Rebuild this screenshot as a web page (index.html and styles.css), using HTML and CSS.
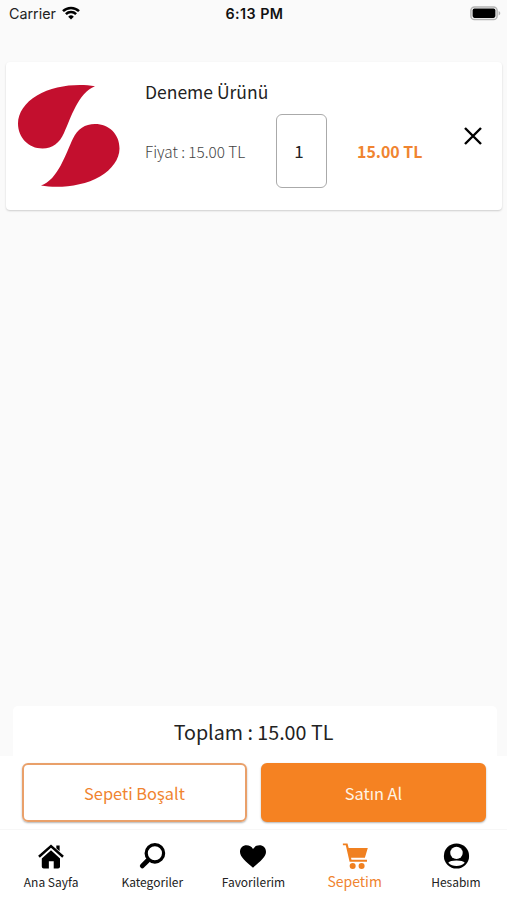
FILE: index.html
```html
<!DOCTYPE html>
<html lang="tr">
<head>
<meta charset="utf-8">
<meta name="viewport" content="width=device-width">
<title>Sepetim</title>
<link rel="stylesheet" href="styles.css">
</head>
<body>
<div class="screen">
  <header class="status">
    <div class="carrier"><span>Carrier</span>
      <svg class="wifi" viewBox="0 0 18 14" width="18" height="14" fill="none" stroke="#000" stroke-width="2.5"><path d="M1 5.2A11.3 11.3 0 0 1 17 5.2M3.9 8.2a7.2 7.2 0 0 1 10.2 0"/><path d="M9 13.6 6.2 10.7a4 4 0 0 1 5.6 0Z" fill="#000" stroke="none"/></svg>
    </div>
    <div class="time">6:13 PM</div>
    <svg class="battery" viewBox="0 0 31 15" width="31" height="15"><rect x=".9" y=".9" width="26.2" height="12.7" rx="3.6" fill="#fafafa" stroke="#b3b3b3" stroke-width="1.5"/><rect x="2.6" y="2.600" width="22.8" height="9.3" rx="1.8"/><path d="M28.6 5v4.500c2.200-.8 2.200-3.700 0-4.500Z" fill="#b3b3b3"/></svg>
  </header>
  <main class="cart">
    <article class="item">
      <svg class="logo" viewBox="0 0 104 104" width="104" height="104" fill="#c30f2e"><path d="M78 2.3C61-.8 36 1.500 20 11.500 8 18.500 1 29 1 39.500c0 14 10.500 25 24.500 25 10 0 17-5.500 21.500-15.500C54 34 61 9 78 2.300Z"/><path d="M24 101.500C41 104.600 66 102.500 83 92.500 95 85.500 102.500 75 102.500 64.500 102.500 50 92 40 78 40 68 40 60.500 45 56 54.500 49 69 41 96 24 101.500Z"/></svg>
      <div class="details">
        <h1 class="name">Deneme Ürünü</h1>
        <div class="row">
          <span class="unit">Fiyat : 15.00 TL</span>
          <span class="qty">1</span>
          <span class="sum">15.00 TL</span>
        </div>
      </div>
      <svg class="remove" viewBox="0 0 18 18" width="18" height="18" stroke="#000" stroke-width="2.4"><path d="M1 1 17 17M17 1 1 17"/></svg>
    </article>
  </main>
  <div class="total-wrap"><section class="total">Toplam : 15.00 TL</section></div>
  <section class="actions">
    <div class="btn outline"><span>Sepeti Boşalt</span></div>
    <div class="btn solid"><span>Satın Al</span></div>
  </section>
  <nav class="tabs">
    <div class="tab"><svg viewBox="0 0 28 28" width="28" height="28"><path d="M19.500 3.200h3.400v6l-3.400-3.100Z"/><path d="M1.600 14.800 14 3.800l12.400 11" fill="none" stroke="#000" stroke-width="2.600"/><path d="m14 8 9.300 8.600v8.200q0 2-2 2h-4.500v-7.300h-5v7.300H6.500q-2 0-2-2v-8.200Z"/></svg><span>Ana Sayfa</span></div>
    <div class="tab"><svg class="lens" viewBox="0 0 28 28" width="28" height="28"><circle cx="17" cy="11.200" r="9" stroke-width="3.400"/><path d="m9.600 18.600-5.600 5.600" stroke-width="5" stroke-linecap="round"/></svg><span>Kategoriler</span></div>
    <div class="tab heart"><svg viewBox="0 0 28 28" width="28" height="28"><path d="M14 26C7 19.800 .6 14.800 .6 9.800.6 5.600 3.600 3 7.300 3 10.200 3 12.600 4.400 14 6.700 15.400 4.400 17.800 3 20.700 3c3.700 0 6.700 2.600 6.700 6.800 0 5-6.400 10-13.400 16.200Z"/></svg><span>Favorilerim</span></div>
    <div class="tab active"><svg viewBox="0 0 28 28" width="28" height="28"><path d="M1.500 1h4.800l1.200 4.800h19.700l-3 9.900H9.900l.5 2.100h16v2H8.400L4.500 3h-3Z"/><circle cx="11.600" cy="24.300" r="3.100"/><circle cx="20.800" cy="24.300" r="3.100"/></svg><span>Sepetim</span></div>
    <div class="tab"><svg viewBox="0 0 28 28" width="28" height="28"><circle cx="14.500" cy="14" r="13"/><g fill="#fff"><circle cx="14.500" cy="10.800" r="6.400"/><path d="M6 21Q8 18.700 14.500 18.700T23 21Q19.500 24.300 14.500 24.300T6 21Z"/></g></svg><span>Hesabım</span></div>
  </nav>
</div>
</body>
</html>
```
FILE: styles.css
```css
* { box-sizing: border-box; }
body { margin: 0; font-family: "Noto Sans CJK SC", "Noto Sans", sans-serif; color: #222; background: #fff; }
.screen { width: 507px; height: 900px; display: flex; flex-direction: column; background: #fff; overflow: hidden; }
.status { height: 28px; display: grid; grid-template-columns: 1fr auto 1fr; align-items: center; padding: 0 6px 0 9px; font: 14.300px/28px Inter, sans-serif; background: #fafafa; flex: none; }
.carrier { display: flex; align-items: center; gap: 6px; }
.wifi { margin: -2px 0 0 0; }
.time { font-weight: 600; color: #111; letter-spacing: .45px; padding-right: 1px; }
.battery { justify-self: end; margin-top: -2px; }
.cart { height: 678px; background: #fafafa; padding: 34px 5px 0 6px; flex: none; }
.item { height: 148px; display: flex; background: #fff; border-radius: 4px; box-shadow: 0 1px 2px rgba(0,0,0,.18); }
.logo { margin: 22px 0 0 11px; flex: none; }
.details { margin: 17px 0 0 24px; width: 318px; }
.name { margin: 0; font-size: 17.500px; font-weight: 400; line-height: 26px; }
.row { display: flex; align-items: center; margin-top: 9px; }
.unit { width: 131px; font-size: 15.300px; font-weight: 300; color: #444; white-space: nowrap; }
.qty { width: 51px; height: 74px; border: 1.500px solid #aaa; border-radius: 6px; display: grid; place-items: center; font-size: 17px; margin-right: 30px; padding: 0 5px 2px 0; }
.sum { font-size: 15.900px; font-weight: 700; color: #f08430; white-space: nowrap; }
.remove { margin: 65px 0 0 1px; flex: none; }
.total-wrap { height: 50px; background: #fafafa; padding: 0 10px 0 13px; flex: none; }
.total { height: 50px; background: #fff; border-radius: 5px 5px 0 0; font-size: 19.700px; line-height: 51px; text-align: center; padding-right: 3px; }
.actions { height: 73px; display: flex; gap: 14px; padding: 7px 21px 6px 22px; flex: none; }
.btn { flex: 1; height: 59px; border: 2px solid #f58222; border-radius: 6px; display: grid; place-items: center; font-size: 16.400px; box-shadow: 0 1px 2px rgba(0,0,0,.3); }
.outline { color: #f08430; border-color: #e9a06a; }
.solid { color: #fff4e5; background: #f58222; }
.tabs { height: 71px; display: grid; grid-template-columns: repeat(5, 101.200px); border-top: 1px solid #f7f7f7; padding-top: 12px; flex: none; }
.tab { display: flex; flex-direction: column; align-items: center; font-size: 12px; line-height: 18px; gap: 3px; padding-left: 1px; }
.tab svg { flex: none; fill: #000; transform: scale(.97); }
.tab .lens { fill: none; stroke: #000; }
.active { color: #f08430; font-size: 14px; gap: 2px; }
.tab.active svg { fill: #f08020; }
```
